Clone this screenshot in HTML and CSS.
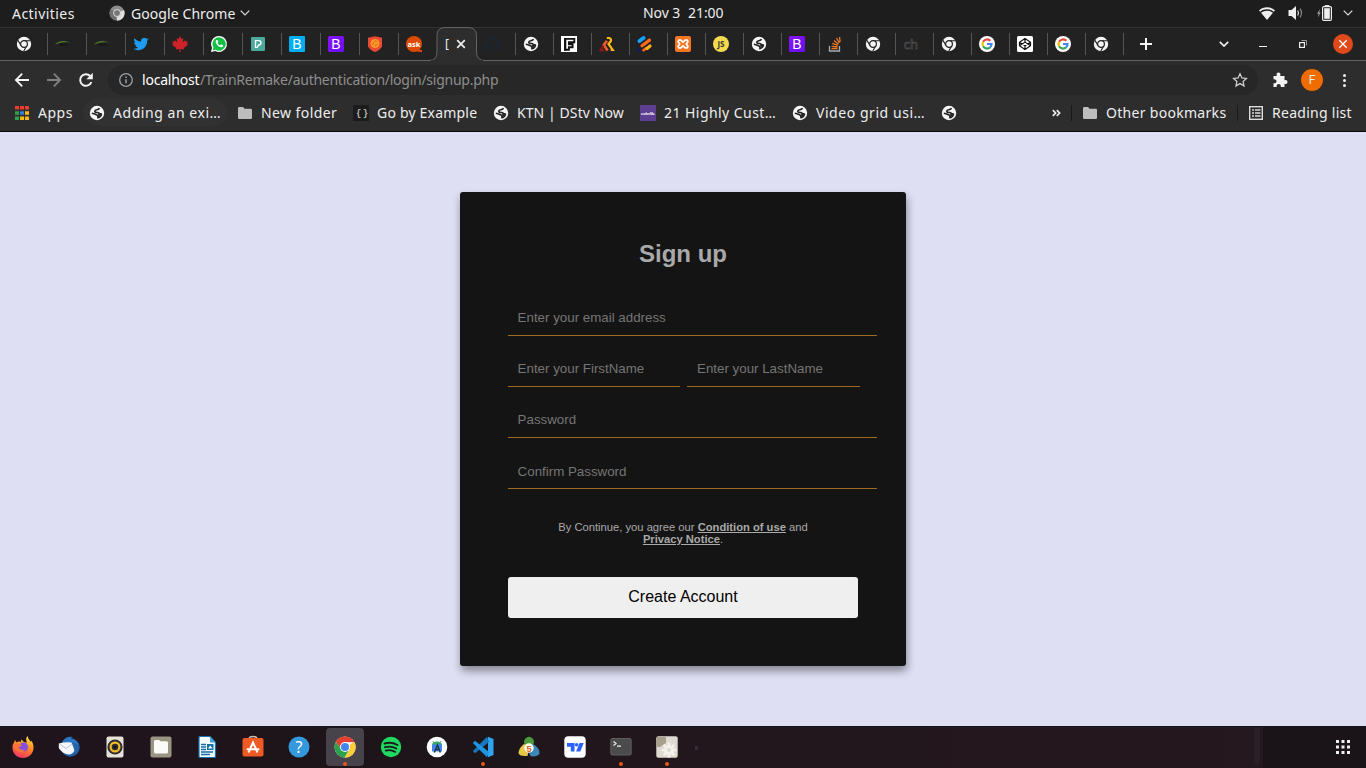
FILE: index.html
```html
<!DOCTYPE html>
<html lang="en">
<head>
<meta charset="utf-8">
<title>Sign up</title>
<link rel="stylesheet" href="styles.css">
</head>
<body>
<svg class="defs" width="0" height="0">
  <defs>
    <linearGradient id="ff" x1="0.7" y1="0" x2="0.3" y2="1"><stop offset="0" stop-color="#ffe23c"/><stop offset=".45" stop-color="#ff8a22"/><stop offset="1" stop-color="#f62f69"/></linearGradient>
    <linearGradient id="tb" x1="0" y1="0" x2="1" y2="1"><stop offset="0" stop-color="#3192dc"/><stop offset="1" stop-color="#1b3d82"/></linearGradient>
    <linearGradient id="bp" x1="0" y1="0" x2="1" y2="1"><stop offset="0" stop-color="#8a12fc"/><stop offset="1" stop-color="#6610f2"/></linearGradient>
    <symbol id="chrome" viewBox="0 0 16 16"><circle cx="8" cy="8" r="7.2" fill="#f4f4f4"/><path d="M8 4.7h6.4M5.1 9.7L2 4.4M10.9 9.6L7.8 15" stroke="#222" stroke-width="1.1" fill="none"/><circle cx="8" cy="8" r="3.4" fill="#f4f4f4" stroke="#222" stroke-width="1.2"/></symbol>
    <symbol id="globe" viewBox="0 0 16 16"><circle cx="8" cy="8" r="7.2" fill="#f6f6f6"/><path d="M10.500 3.200C9.500 5.400 6 4.200 5.800 6.200c0 1.500 1.800 1.200 3 1.300 1.300.2 1.200 1.600 3.700 1.500-.3 2-1.700 3.400-3.600 3.800 0-1.500.3-2.300-.8-2.800C6.500 9.300 5 8.500 2.800 8.300" fill="none" stroke="#222" stroke-width="1.600" stroke-linejoin="round"/><path d="M9 8.500l3.300.8-2.800 3.200z" fill="#222"/></symbol>
    <symbol id="google" viewBox="0 0 16 16"><circle cx="8" cy="8" r="8" fill="#fff"/><g fill="none" stroke-width="2.200"><path d="M4.100 5.800A4.500 4.500 0 0 1 11.300 4.800" stroke="#ea4335"/><path d="M4.100 10.200A4.500 4.500 0 0 1 4.100 5.800" stroke="#fbbc05"/><path d="M11 11.400A4.500 4.500 0 0 1 4.100 10.200" stroke="#34a853"/><path d="M8 8h4.500a4.500 4.500 0 0 1-1.500 3.400" stroke="#4285f4"/></g></symbol>
    <symbol id="folder" viewBox="0 0 16 16"><path d="M1 3.200Q1 2 2.200 2H6l1.600 1.700h6.200Q15 3.700 15 5v7.800Q15 14 13.800 14H2.200Q1 14 1 12.800z" fill="#bdbdbd"/></symbol>
    <symbol id="arc" viewBox="0 0 16 16"><path d="M0 8.800C3 4.300 9 4 15.500 6.600 9 5.800 4 6.600 0 8.800z" fill="#4f7425"/><text x="4.500" y="10.300" class="arc-t">NOC</text></symbol>
    <symbol id="boot" viewBox="0 0 16 16"><rect width="16" height="16" rx="1.500" fill="url(#bp)"/><text x="8" y="13" class="b-t">B</text></symbol>
    <symbol id="gear" viewBox="0 0 16 16"><circle cx="8" cy="8" r="5" fill="currentColor"/><path d="M8 .5v15M.5 8h15M2.700 2.700l10.600 10.600M13.300 2.700L2.700 13.300" stroke="currentColor" stroke-width="2.600"/><circle cx="8" cy="8" r="2" fill="#dedad2"/></symbol>
  </defs>
</svg>

<div class="topbar">
  <span class="activities">Activities</span>
  <span class="app">
    <svg width="16" height="16" viewBox="0 0 16 16"><circle cx="8" cy="8" r="7.500" fill="#8d8d8d"/><path d="M8 8L15 5a7.500 7.500 0 0 1-7 10.500z" fill="#dedede"/><path d="M1.500 4.200L8 8l-1 7.400A7.500 7.500 0 0 1 1.500 4.200z" fill="#707070"/><circle cx="8" cy="8" r="3.500" fill="#777" stroke="#ddd"/></svg>
    <span class="app-name">Google Chrome</span>
    <svg class="app-caret" width="10" height="6" viewBox="0 0 10 6"><path d="M.7.7L5 5 9.300.7" fill="none" stroke="#ddd" stroke-width="1.200"/></svg>
  </span>
  <span class="clock"><span>Nov 3</span><span>21:00</span></span>
  <span class="status">
    <svg width="16" height="13" viewBox="0 0 16 13"><path d="M0 3.400C4.500-.8 11.500-.8 16 3.400L14.900 4.700C11 1.500 5 1.500 1.100 4.700zM2 5.700C5.500 3 10.500 3 14 5.700L8 13z" fill="#eee"/></svg>
    <svg width="16" height="14" viewBox="0 0 16 14"><path d="M.5 4h3L8 0v14L3.500 10h-3z" fill="#eee"/><path d="M9.700 4.500q1.600 2.500 0 5" stroke="#ddd" stroke-width="1.200" fill="none"/><path d="M12 2.700q3 4.300 0 8.600" stroke="#888" stroke-width="1.200" fill="none"/></svg>
    <svg width="15" height="16" viewBox="0 0 15 16"><path d="M3 4L0 8.700h1.500L.9 12.500 3.700 7.500H2.300z" fill="#999"/><path d="M8 1.800V.6h4v1.200" stroke="#eee" fill="none"/><rect x="5.600" y="1.600" width="8.800" height="13.800" rx="1.200" fill="none" stroke="#eee" stroke-width="1.200"/><rect x="7.200" y="3.200" width="5.600" height="10.600" fill="#eee"/></svg>
    <svg width="10" height="6" viewBox="0 0 10 6"><path d="M.7.700L5 5 9.300.700" fill="none" stroke="#ddd" stroke-width="1.200"/></svg>
  </span>
</div>

<div class="tabs">
  <div class="tab"><svg><use href="#chrome"/></svg></div>
  <div class="tab"><svg><use href="#arc"/></svg></div>
  <div class="tab"><svg><use href="#arc"/></svg></div>
  <div class="tab"><svg viewBox="0 0 24 24"><path fill="#1d9bf0" d="M23.600 4.900c-.9.400-1.800.6-2.700.8 1-.6 1.700-1.500 2.100-2.600-.9.500-1.900.9-3 1.100A4.700 4.700 0 0 0 12 8.500C8 8.300 4.500 6.400 2.200 3.500c-1.200 2.100-.6 4.900 1.500 6.300-.8 0-1.500-.2-2.100-.6 0 2.200 1.500 4.200 3.800 4.700-.7.200-1.400.2-2.100.1.600 1.900 2.300 3.200 4.400 3.300A9.500 9.500 0 0 1 .7 19.200c8.600 5.500 20.600.5 20.500-11.900.9-.600 1.700-1.500 2.400-2.400z"/></svg></div>
  <div class="tab"><svg><path fill="#cc2229" d="M8 0l1.600 3 1.800-.8-.6 4 2.200-2 .6 1.300 2.300-.3-.8 2.600 1 .8-4.300 3.500.5 1.300-3.800-.5.200 3H7.300l.2-3-3.800.5.500-1.300L0 8.600l1-.8L.2 5.200l2.300.3L3.100 4.200l2.200 2-.7-4 1.800.8z"/></svg></div>
  <div class="tab"><svg><path d="M8 0a8 8 0 1 1-3.700 15.100L0 16l1-4.200A8 8 0 0 1 8 0z" fill="#fff"/><path d="M8 1.300a6.700 6.700 0 1 1-3.300 12.500l-3 .7.800-3A6.700 6.700 0 0 1 8 1.300z" fill="#12c143"/><path d="M5.500 4c-1.200.8-1.100 2.400.2 4.200 1.500 2.100 3.600 3.500 5.200 3 1.200-.400 1.400-1.300 1.200-2l-2-1-1 1.200C7.900 8.900 7.100 8 6.600 6.900l.8-1-.9-2z" fill="#fff"/></svg></div>
  <div class="tab"><svg><rect x="1" y="1" width="14" height="14" rx="1" fill="#4ba99e"/><path d="M5.500 4.600h3.200q2.300 0 2.300 2.200T8.700 9L7.200 11.400H5.500z" fill="none" stroke="#fff" stroke-width="1.300"/></svg></div>
  <div class="tab"><svg><rect width="16" height="16" rx="1" fill="#00adef"/><text x="8" y="13" class="b-t">B</text></svg></div>
  <div class="tab"><svg><use href="#boot"/></svg></div>
  <div class="tab"><svg><path d="M1 1.700L8 .3l7 1.400v8.500Q13.500 14 8 16 2.500 14 1 10.200z" fill="#e84a35"/><circle cx="8" cy="7.500" r="4.500" fill="#f69a22"/><path d="M5.500 9l2-3.500M8 10l2.500-2M8 4.500l2 1" stroke="#e8572f" fill="none"/></svg></div>
  <div class="tab plain"><svg><circle cx="8" cy="8" r="8" fill="#dd4a05"/><path d="M10 14h6v2.200l-4.500-.7z" fill="#dd4a05"/><text x="8" y="10.700" class="ask-t">ask</text></svg></div>
  <div class="tab active">
    <svg class="tab-shape" width="60" height="34" viewBox="0 0 60 34"><path d="M0 33.500h2Q10 33.500 10 25V8.500Q10 .5 18 .5h23Q49.500.5 49.500 8.500V25Q49.500 33.500 57.500 33.500H60V35H0z" fill="#2d2d2d" stroke="#646464"/><path d="M4 34h52" stroke="#2d2d2d" stroke-width="2"/></svg>
    <span class="tab-title">[</span>
    <svg class="tab-x" viewBox="0 0 10 10"><path d="M1.200 1.200l7.600 7.600M8.800 1.200L1.200 8.800" stroke="#eee" stroke-width="1.700"/></svg>
  </div>
  <div class="tab wide"><svg><path fill="#1b2631" d="M8 .3a7.700 7.700 0 0 0-2.400 15c.4.100.5-.2.5-.4v-1.500c-2.200.5-2.600-1-2.600-1-.4-.9-.9-1.200-.9-1.200-.7-.500.1-.5.1-.5.800.100 1.200.8 1.200.8.7 1.200 1.800.9 2.300.7 0-.5.200-.9.500-1.100-1.800-.2-3.600-.9-3.600-3.900 0-.8.300-1.500.8-2.100 0-.2-.3-1 .1-2 0 0 .7-.2 2.200.8a7 7 0 0 1 3.800 0c1.500-1 2.200-.8 2.200-.8.400 1 .1 1.800.1 2 .5.600.8 1.300.8 2.100 0 3-1.800 3.700-3.600 3.900.3.300.6.800.6 1.500v2.300c0 .2.100.5.500.4A7.700 7.700 0 0 0 8 .3z"/></svg></div>
  <div class="tab narrow"><svg><use href="#globe"/></svg></div>
  <div class="tab narrow"><svg><rect width="16" height="16" fill="#fff"/><path d="M4 13.800V2.900h9.300v3.300H7.900v2h3.700v3H7.900v2.600z" fill="#fff" stroke="#111" stroke-width="1.900"/><path d="M3 2h2.300v12.700H3z" fill="#111"/></svg></div>
  <div class="tab narrow"><svg><path d="M7.800 2h2.600q3.200 1.800.3 4.600L9.500 8l4.200 5.800h-2" fill="none" stroke="#fcb717" stroke-width="2.200"/><path d="M8 4.800L4.800 8.900 8.600 14.500" fill="none" stroke="#ef5b30" stroke-width="2.600"/><path d="M4.300 9.500L1.500 14.300h4" fill="none" stroke="#8c1919" stroke-width="2"/></svg></div>
  <div class="tab narrow"><svg><path d="M2.500 5L6.500 2" stroke="#12a1ff" stroke-width="4" stroke-linecap="round"/><path d="M5 9.700l7.500-5.600" stroke="#ff6a1b" stroke-width="3.200" stroke-linecap="round"/><path d="M6.500 14.200L9 12.200" stroke="#ff6a1b" stroke-width="2.600" stroke-linecap="round"/><path d="M10 12.500l3-2.500" stroke="#ffb11b" stroke-width="3.200" stroke-linecap="round"/><path d="M0 12h4v4H0z" fill="#141c50"/></svg></div>
  <div class="tab narrow"><svg><rect width="16" height="16" rx="2" fill="#f37623"/><path d="M3.800 4.200h2L8 6.200l2.200-2h2l.8 1.400L11.300 8l1.700 2.400-.8 1.400h-2L8 9.800l-2.200 2h-2L3 10.400 4.700 8 3 5.600z" fill="none" stroke="#fff" stroke-width="1.700" stroke-linejoin="round"/></svg></div>
  <div class="tab narrow"><svg><circle cx="8" cy="8" r="8" fill="#f5d94e"/><text x="8" y="10.900" class="js-t">JS</text></svg></div>
  <div class="tab narrow"><svg><use href="#globe"/></svg></div>
  <div class="tab narrow"><svg><use href="#boot"/></svg></div>
  <div class="tab narrow"><svg><path d="M2.500 10v5h10v-5" fill="none" stroke="#a7adb5" stroke-width="1.300"/><path d="M4.500 12.700h6M4.600 10.300l6 .7M5.300 7.400l5.500 2M7 4.600l4.500 3.700M9.500 2.200l3 4.800M12.500 1l.6 5" stroke="#ef7b20" stroke-width="1.300"/></svg></div>
  <div class="tab narrow"><svg><use href="#chrome"/></svg></div>
  <div class="tab narrow"><svg><text x="8" y="13" class="ch-t">ch</text></svg></div>
  <div class="tab narrow"><svg><use href="#chrome"/></svg></div>
  <div class="tab narrow"><svg><use href="#google"/></svg></div>
  <div class="tab narrow"><svg><rect width="16" height="16" rx="1.500" fill="#fff"/><path d="M8 2.500l5.500 3.700v3.600L8 13.500 2.500 9.800V6.200zM8 2.500v3.600M8 13.500V9.900M2.500 6.200L8 9.900l5.500-3.700M2.500 9.800L8 6.100l5.500 3.700" fill="none" stroke="#111" stroke-width="1.200"/></svg></div>
  <div class="tab narrow"><svg><use href="#google"/></svg></div>
  <div class="tab narrow"><svg><use href="#chrome"/></svg></div>
  <svg class="plus" viewBox="0 0 12 12"><path d="M6 0v12M0 6h12" stroke="#f4f4f4" stroke-width="2"/></svg>
  <div class="win">
    <svg width="10" height="6" viewBox="0 0 10 6"><path d="M.8.800L5 5 9.200.800" fill="none" stroke="#eee" stroke-width="1.700"/></svg>
    <svg width="8" height="8" viewBox="0 0 8 8"><path d="M0 6.500h8" stroke="#eee"/></svg>
    <svg width="8" height="8" viewBox="0 0 8 8"><rect x=".6" y="2.600" width="4.800" height="4.800" fill="none" stroke="#eee" stroke-width="1.200"/><path d="M2.500.5h5v5" stroke="#999" fill="none"/></svg>
    <svg width="20" height="20" viewBox="0 0 20 20"><circle cx="10" cy="10" r="10" fill="#e04a1b"/><path d="M6.300 6.300l7.400 7.400M13.700 6.300l-7.400 7.400" stroke="#fff" stroke-width="1.300"/></svg>
  </div>
</div>

<div class="toolbar">
  <svg class="nav" viewBox="0 0 16 16"><path d="M8.200 1.700L1.900 8l6.300 6.300M2 8h13" fill="none" stroke="#f4f4f4" stroke-width="1.800"/></svg>
  <svg class="nav" viewBox="0 0 16 16"><path d="M7.800 1.700L14.100 8l-6.300 6.300M14 8H1" fill="none" stroke="#808080" stroke-width="1.800"/></svg>
  <svg class="nav" viewBox="0 0 16 16"><path d="M13.400 10A5.800 5.800 0 1 1 12.200 4" fill="none" stroke="#f4f4f4" stroke-width="2"/><path d="M14.800.8v6.400H8.400z" fill="#f4f4f4"/></svg>
  <div class="omnibox">
    <svg width="16" height="16" viewBox="0 0 16 16"><circle cx="8" cy="8" r="6.300" fill="none" stroke="#9aa0a6" stroke-width="1.300"/><path d="M8 7.200v4M8 4.500v1.400" stroke="#9aa0a6" stroke-width="1.500"/></svg>
    <span class="url"><b>localhost</b><span>/TrainRemake/authentication/login/signup.php</span></span>
    <svg class="star" viewBox="0 0 16 16"><path d="M8 1.800l1.900 4.100 4.500.5-3.300 3 .9 4.500L8 11.600l-4 2.300.9-4.500-3.300-3 4.500-.5z" fill="none" stroke="#ccc" stroke-width="1.300"/></svg>
  </div>
  <svg class="ext" viewBox="0 0 16 16"><path d="M1.500 4h3.300C4 1.700 5.200.6 6.500.6S9 1.700 8.200 4h4.300v4.200C14.400 7.500 15.500 8.600 15.500 10s-1.100 2.500-3 1.800V15H8.800c.3-2-.8-3-2.100-3s-2.400 1-2.100 3H1.500v-3.700c2 .3 3-.8 3-2s-1-2.300-3-2z" fill="#f4f4f4"/></svg>
  <span class="avatar">F</span>
  <span class="dots"><i></i><i></i><i></i></span>
</div>

<div class="bookmarks">
  <div class="bm w1"><svg viewBox="0 0 16 16"><g><path d="M1 2.700h14" stroke="#f03c2e" stroke-width="3.400" stroke-dasharray="4 1"/><path d="M1 8h4M1 13.300h4" stroke="#2ba24c" stroke-width="3.400"/><path d="M6 8h4" stroke="#2f80ed" stroke-width="3.400"/><path d="M11 8h4M6 13.300h9" stroke="#f8b912" stroke-width="3.400" stroke-dasharray="4 1"/></g></svg><span>Apps</span></div>
  <div class="bm w2"><svg><use href="#globe"/></svg><span>Adding an exi…</span></div>
  <div class="bm w3"><svg><use href="#folder"/></svg><span>New folder</span></div>
  <div class="bm w4"><svg><rect width="16" height="16" fill="#1c1c1c"/><text x="8" y="11.200" class="br-t">{ }</text></svg><span>Go by Example</span></div>
  <div class="bm w5"><svg><use href="#globe"/></svg><span>KTN | DStv Now</span></div>
  <div class="bm w6"><svg><rect width="16" height="16" fill="#5c3d8f"/><text x="8" y="9.600" class="co-t">colorlib.</text></svg><span>21 Highly Cust…</span></div>
  <div class="bm w7"><svg><use href="#globe"/></svg><span>Video grid usi…</span></div>
  <div class="bm w8"><svg><use href="#globe"/></svg></div>
  <div class="bm-right">
    <svg class="more" viewBox="0 0 9 8"><path d="M.8 1.200L3.600 4 .8 6.800M4.800 1.200L7.600 4 4.800 6.800" fill="none" stroke="#eee" stroke-width="1.700"/></svg>
    <div class="bm r1"><svg><use href="#folder"/></svg><span>Other bookmarks</span></div>
    <div class="bm r2"><svg viewBox="0 0 16 16"><rect x="1.700" y="1.700" width="12.600" height="12.600" fill="none" stroke="#ddd" stroke-width="1.400"/><path d="M4 5h2M4 8h2M4 11h2M7 5h5.500M7 8h5.500M7 11h5.500" stroke="#ddd" stroke-width="1.500"/></svg><span>Reading list</span></div>
  </div>
</div>

<main class="page">
  <form class="card">
    <h2>Sign up</h2>
    <input class="field" type="text" placeholder="Enter your email address">
    <div class="pair">
      <input class="field" type="text" placeholder="Enter your FirstName">
      <input class="field last-name" type="text" placeholder="Enter your LastName">
    </div>
    <input class="field" type="password" placeholder="Password">
    <input class="field confirm" type="password" placeholder="Confirm Password">
    <p class="terms">By Continue, you agree our <a>Condition of use</a> and <a>Privacy Notice</a>.</p>
    <button class="create" type="button">Create Account</button>
  </form>
</main>

<footer class="dock">
  <div class="launch"><svg viewBox="0 0 22 22"><path d="M3 4l1.500 2.500Q6.500 5 9 6q-.5-1 .5-2.500Q12 7 15 6.500 13 3 15.500 0q.5 3 3.500 6 .5-1-.2-2Q22 8 21.500 12.500C21 18 16.500 22 11 22S.5 18 .5 11.500Q.5 8 2 6.500z" fill="url(#ff)"/><circle cx="11.500" cy="11" r="4.600" fill="#8350e0"/><path d="M1 9.500q4-3 9-.5-1.500 2.500-4 2 2 4 7 2.500-3 4.500-8 1.500-3-2-4-5.500z" fill="#ff7139"/></svg></div>
  <div class="launch"><svg viewBox="0 0 22 22"><circle cx="12.500" cy="11.500" r="9.300" fill="url(#tb)"/><path d="M4 6Q8-.5 15 1q-2 .8-3 2.500 6-.5 8 5-1 8-9 11z" fill="#2b76c4"/><path d="M.8 7.500q7-2 12.700-1l3 8q-2 4-6 4Q4 17.500.8 12z" fill="#f5f7fb"/><path d="M1.500 8l6.500 4.500 6-4.500" fill="none" stroke="#aab7c8" stroke-width=".8"/><path d="M13.500 6.500q4 3 3 8.500-1 4-6 5.500 9-.5 10.500-8-1-6-7.500-6z" fill="#2462aa"/></svg></div>
  <div class="launch"><svg viewBox="0 0 22 22"><rect x="2.500" y=".5" width="17" height="21" rx="2" fill="#e6e2d8"/><circle cx="11" cy="11" r="7.600" fill="#2e2e34"/><circle cx="11" cy="11" r="4.400" fill="#2e2e34" stroke="#eebc23" stroke-width="2.200"/><circle cx="11" cy="11" r="1.500" fill="#111"/></svg></div>
  <div class="launch"><svg viewBox="0 0 22 22"><rect x=".5" y=".5" width="21" height="21" rx="2" fill="#9a9483"/><path d="M4 5.500Q4 4 5.500 4H9l1.500 1.200h6Q18 5.200 18 6.700V16q0 1.500-1.500 1.500h-11Q4 17.500 4 16z" fill="#fafaf7"/></svg></div>
  <div class="launch"><svg viewBox="0 0 22 22"><path d="M3 1.500Q3 .5 4 .5h10l5.500 6v14q0 1-1 1H4q-1 0-1-1z" fill="#f4f9fc" stroke="#1673ab" stroke-width="1.200"/><path d="M14 .5v6h5.500z" fill="#46a3d6"/><path d="M5 8.500h5M5 11h5M5 13.500h5M5 16h12M5 18.500h9" stroke="#166fa5" stroke-width="1.300"/><rect x="11" y="8" width="6.500" height="6" fill="#166fa5"/><path d="M12 12.500l2.300-3 2.300 3z" fill="#fff"/></svg></div>
  <div class="launch"><svg viewBox="0 0 22 22"><path d="M7 3Q7 .5 11 .5T15 3" fill="none" stroke="#d7c4ac" stroke-width="1.400"/><rect x=".5" y="2" width="21" height="18.500" rx="2" fill="#ef5a24"/><path d="M6.500 16.500L11 6.500l4.500 10M4.700 13.300h12.600" fill="none" stroke="#fff" stroke-width="2"/></svg></div>
  <div class="launch"><svg viewBox="0 0 22 22"><circle cx="11" cy="11" r="10.500" fill="#3498dc"/><text x="11" y="16.500" class="q-t">?</text></svg></div>
  <div class="launch on"><svg viewBox="0 0 22 22"><circle cx="11" cy="11" r="10.500" fill="#fff"/><path d="M11 11L20.500 6A10.500 10.500 0 0 1 10.500 21.500l5-8.500z" fill="#fdcf3b"/><path d="M1.900 5.700A10.500 10.500 0 0 0 10.500 21.500L15.500 13 11 15l-4-2z" fill="#2ba24c"/><path d="M1.900 5.700A10.500 10.500 0 0 1 20.400 6.200H11L7 13z" fill="#e3402f"/><circle cx="11" cy="11" r="5" fill="#fff"/><circle cx="11" cy="11" r="4" fill="#4285f4"/></svg><i></i></div>
  <div class="launch"><svg viewBox="0 0 22 22"><circle cx="11" cy="11" r="10.200" fill="#20d760"/><path d="M4.500 7.500q7-2 13 1.500M5 11.200q6-1.700 11.300 1.300M5.700 14.600q5-1.300 9.300 1.200" fill="none" stroke="#1b1b1b" stroke-width="1.900" stroke-linecap="round"/></svg></div>
  <div class="launch"><svg viewBox="0 0 22 22"><circle cx="11" cy="11" r="10.300" fill="#fff"/><path d="M6 9.500q0-4 5-4t5 4z" fill="#39a86c"/><path d="M6.800 5l1 1.500M15.200 5l-1 1.500" stroke="#39a86c"/><path d="M6 8.500h10v7H6z" fill="#3d86ee"/><path d="M8.300 16.500L11.500 9l2.800 7.500M9.500 13.500h4" fill="none" stroke="#253746" stroke-width="1.500"/></svg></div>
  <div class="launch"><svg viewBox="0 0 22 22"><path d="M16 .8L21.500 3v16L16 21.200z" fill="#2fa5ef"/><path d="M15 .8L17 6 3 17.200.8 15z" fill="#1577bd"/><path d="M3 4.800L.8 7 15 21.200l2-5.200z" fill="#1f94e0"/></svg><i></i></div>
  <div class="launch"><svg viewBox="0 0 22 22"><circle cx="11" cy="6" r="5" fill="#4c9b3b"/><path d="M9.500 2L11 .5 12.500 2z" fill="#4c9b3b"/><path d="M6 8q5 1 4.500 7l-1 5q-9 .5-9-3.500Q1 12 6 8z" fill="#e7c948"/><path d="M15 8q7 4 6.500 10-3 3.500-9 2l-2-5z" fill="#3d87b8"/><circle cx="11" cy="12" r="4.700" fill="#fff"/><text x="11" y="15.500" class="mt-t">5</text></svg></div>
  <div class="launch"><svg viewBox="0 0 22 22"><rect x=".3" y=".3" width="21.400" height="21.400" rx="4" fill="#fff"/><path d="M3 7h7.500v8.500H6.800v-4.800H3z" fill="#2962ff"/><circle cx="12.600" cy="8.800" r="1.800" fill="#2962ff"/><path d="M15.500 7h4.200l-3.400 8.500h-4.200z" fill="#2962ff"/></svg></div>
  <div class="launch"><svg viewBox="0 0 22 22"><rect x=".8" y="2.500" width="20.400" height="16.500" rx="1.500" fill="#4b4b4b" stroke="#686868" stroke-width=".8"/><path d="M3.500 5.500l2.500 2-2.500 2M7 10.200h4" fill="none" stroke="#eee" stroke-width="1.200"/></svg><i></i></div>
  <div class="launch"><svg viewBox="0 0 22 22"><rect x=".3" y=".3" width="21.400" height="21.400" rx="2" fill="#dedad2"/><path d="M1 1h9v6l-6 4H1z" fill="#a9a08c"/><svg x="4.500" y="6" width="17" height="16" class="cog"><use href="#gear"/></svg></svg><i></i></div>
  <span class="speck"></span>
  <span class="strip"></span>
  <div class="dock-end">
    <svg width="14" height="14" viewBox="0 0 14 14"><path d="M0 1.500h14M0 7h14M0 12.500h14" stroke="#eee" stroke-width="3" stroke-dasharray="3 2.500"/></svg>
  </div>
</footer>
</body>
</html>
```
FILE: styles.css
```css
* { box-sizing: border-box; }
body {
  margin: 0;
  width: 1366px;
  height: 768px;
  overflow: hidden;
  display: flex;
  flex-direction: column;
  background: #dedff3;
  font-family: "Noto Sans", "Open Sans", sans-serif;
  font-size: 14px;
  color: #eee;
}
svg { display: block; flex: none; }
.defs { position: absolute; }

.topbar {
  height: 28px;
  flex: none;
  display: grid;
  grid-template-columns: 109px 534px 1fr 107px;
  align-items: center;
  padding-bottom: 1px;
  background: #1d1d1d;
  border-bottom: 1px solid #333;
  white-space: nowrap;
}
.activities { padding-left: 12px; letter-spacing: .45px; }
.app { display: flex; align-items: center; }
.app-name { width: 109px; margin-left: 6px; letter-spacing: .08px; }
.clock { display: flex; gap: 8px; padding-bottom: 1px; letter-spacing: -0.1px; }
.status { display: flex; align-items: center; }
.status svg { margin-right: 13px; }
.status svg:nth-child(3) { margin-right: 11px; }
.status svg:nth-child(4) { margin-right: 0; }

.tabs {
  height: 33px;
  flex: none;
  display: flex;
  align-items: center;
  padding-left: 9px;
  background: #222;
  border-bottom: 1px solid #646464;
}
.tab {
  width: 39px;
  height: 22px;
  flex: none;
  display: flex;
  align-items: center;
  padding-left: 7px;
  border-right: 1px solid #555;
}
.tab svg { width: 16px; height: 16px; overflow: visible; }
.tab.narrow { width: 38px; }
.tab.plain { border-right: 0; }
.tab.active { position: relative; border-right: 0; padding-left: 7px; }
.tab.active .tab-shape { position: absolute; left: -11px; top: -6px; width: 60px; height: 34px; overflow: hidden; }
.tab-title { position: relative; width: 11px; font-size: 12px; line-height: 20px; }
.tab.active .tab-x { position: relative; width: 10px; height: 10px; }
.plus { width: 12px; height: 12px; margin-left: 16px; }
.win { margin-left: auto; display: flex; align-items: center; padding-right: 13px; }
.win svg:nth-child(1) { margin-right: 30px; }
.win svg:nth-child(2) { margin-right: 32px; }
.win svg:nth-child(3) { margin-right: 26px; }

.toolbar {
  height: 38px;
  flex: none;
  display: flex;
  align-items: center;
  padding-left: 14px;
  background: #2d2d2d;
}
.nav { width: 16px; height: 16px; margin-right: 16px; }
.nav:nth-child(3) { margin-right: 14px; }
.omnibox {
  width: 1150px;
  height: 30px;
  flex: none;
  display: flex;
  align-items: center;
  padding: 0 10px;
  background: #272727;
  border-radius: 15px;
}
.url { margin-left: 8px; padding-bottom: 1px; display: flex; color: #8e8e8e; }
.url b { width: 58px; font-weight: 400; color: #fff; letter-spacing: -0.2px; }
.url span { letter-spacing: -0.26px; }
.star { width: 16px; height: 16px; margin-left: auto; }
.ext { width: 16px; height: 16px; margin-left: 14px; }
.avatar {
  width: 22px;
  height: 22px;
  margin-left: 13px;
  border-radius: 50%;
  background: #ef6c00;
  font: 12px/22px Roboto, sans-serif;
  text-align: center;
}
.dots { margin-left: 20px; display: grid; gap: 2px; }
.dots i { width: 3px; height: 3px; border-radius: 50%; background: #eee; }

.bookmarks {
  height: 33px;
  flex: none;
  display: flex;
  align-items: center;
  padding: 0 14px 5px 14px;
  background: #2d2d2d;
  border-bottom: 1px solid #0c080b;
  white-space: nowrap;
}
.bm { display: flex; align-items: center; gap: 8px; flex: none; }
.bm svg { width: 16px; height: 16px; }
.w1 { width: 69px; letter-spacing: .5px; }
.w2 { width: 144px; height: 27px; margin-right: 10px; padding-left: 6px; border-radius: 14px; background: #313131; letter-spacing: .55px; }
.w3 { width: 116px; letter-spacing: .42px; }
.w4 { width: 140px; letter-spacing: .2px; }
.w5 { width: 147px; letter-spacing: .08px; }
.w6 { width: 152px; letter-spacing: .45px; }
.w7 { width: 149px; letter-spacing: .55px; }
.bm-right { margin-left: auto; display: flex; align-items: center; }
.more { width: 9px; height: 8px; margin-right: 10px; }
.r1, .r2 { height: 16px; border-left: 1px solid #191919; padding-left: 10px; }
.r1 { width: 166px; letter-spacing: .3px; }
.r2 { width: 115px; letter-spacing: .28px; }

.page { flex: 1; background: #dedff3; }
.card {
  width: 446px;
  height: 474px;
  margin: 60px auto 0;
  padding: 48px;
  background: #141414;
  border-radius: 3px;
  box-shadow: 1px 5px 8px rgba(0, 0, 0, .4);
  font-family: "Liberation Sans", Arial, sans-serif;
  color: #a9a9a9;
}
.card h2 { margin: 0 0 32px; font-size: 24px; line-height: 28px; text-align: center; }
.field {
  display: block;
  width: 369px;
  height: 36px;
  margin: 0 0 15.100px;
  padding: 0 9.600px;
  border: 0;
  border-bottom: 1px solid #9e6b1e;
  border-radius: 0;
  background: transparent;
  font: 13.333px "Liberation Sans", Arial, sans-serif;
}
.field::placeholder { color: #757575; }
.field.last-name { padding-left: 10px; }
.field.confirm { padding-top: 1px; }
.pair { display: grid; grid-template-columns: 172px 173px; column-gap: 7px; }
.pair .field { width: 100%; }
.terms { width: 270px; margin: 31.700px auto 0; font-size: 11.200px; line-height: 12px; text-align: center; }
.terms a { font-weight: 700; text-decoration: underline; }
.create {
  display: block;
  width: 350px;
  height: 41px;
  margin-top: 32px;
  padding: 0 0 1px;
  border: 0;
  border-radius: 3px;
  background: #efefef;
  color: #000;
  font: 16px "Liberation Sans", Arial, sans-serif;
}

.dock {
  height: 42px;
  flex: none;
  display: flex;
  align-items: center;
  background: linear-gradient(90deg, #20141c, #1c1519 528px, #22161d 529px, #25191f);
  border-top: 1px solid #16161a;
}
.launch { width: 46px; height: 38px; flex: none; position: relative; display: flex; align-items: center; justify-content: center; padding-bottom: 1px; }
.launch > svg { width: 22px; height: 22px; overflow: visible; }
.launch.on { width: 38px; margin: 0 4px 1px; padding-bottom: 0; border-radius: 4px; background: #48424a; }
.launch i { position: absolute; left: calc(50% - 2px); bottom: 1px; width: 4px; height: 4px; border-radius: 50%; background: #e95420; }
.launch.on i { bottom: 0; }
.cog { color: #f3f1ec; }
.speck { width: 3px; height: 4px; margin-left: 5px; background: #352c3a; }
.strip { width: 6px; height: 37px; margin-left: auto; margin-right: 3px; margin-bottom: 3px; border-radius: 0 0 3px 3px; background: #2a1f26; }
.dock-end { width: 103px; height: 41px; display: flex; align-items: center; padding: 0 0 1px 73px; background: #1a1418; }

.arc-t { font: 700 4px "Liberation Sans", sans-serif; fill: #101010; }
.b-t { font: 14px "Liberation Sans", sans-serif; fill: #fff; text-anchor: middle; }
.ask-t { font: 700 7.500px "Noto Sans", sans-serif; fill: #fff; text-anchor: middle; }
.js-t { font: 700 8px "Noto Sans", sans-serif; fill: #333; text-anchor: middle; }
.ch-t { font: 13px "Noto Sans", sans-serif; fill: #151515; stroke: #5a5a5a; stroke-width: .6px; text-anchor: middle; }
.br-t { font: 700 9px "Liberation Mono", monospace; letter-spacing: -2px; fill: #bbb; text-anchor: middle; }
.co-t { font: 700 4px "Liberation Sans", sans-serif; letter-spacing: -.2px; fill: #fff; text-anchor: middle; }
.q-t { font: 16px "Noto Sans", sans-serif; fill: #fff; text-anchor: middle; }
.mt-t { font: 700 9px "Liberation Sans", sans-serif; fill: #d55b14; text-anchor: middle; }
```
